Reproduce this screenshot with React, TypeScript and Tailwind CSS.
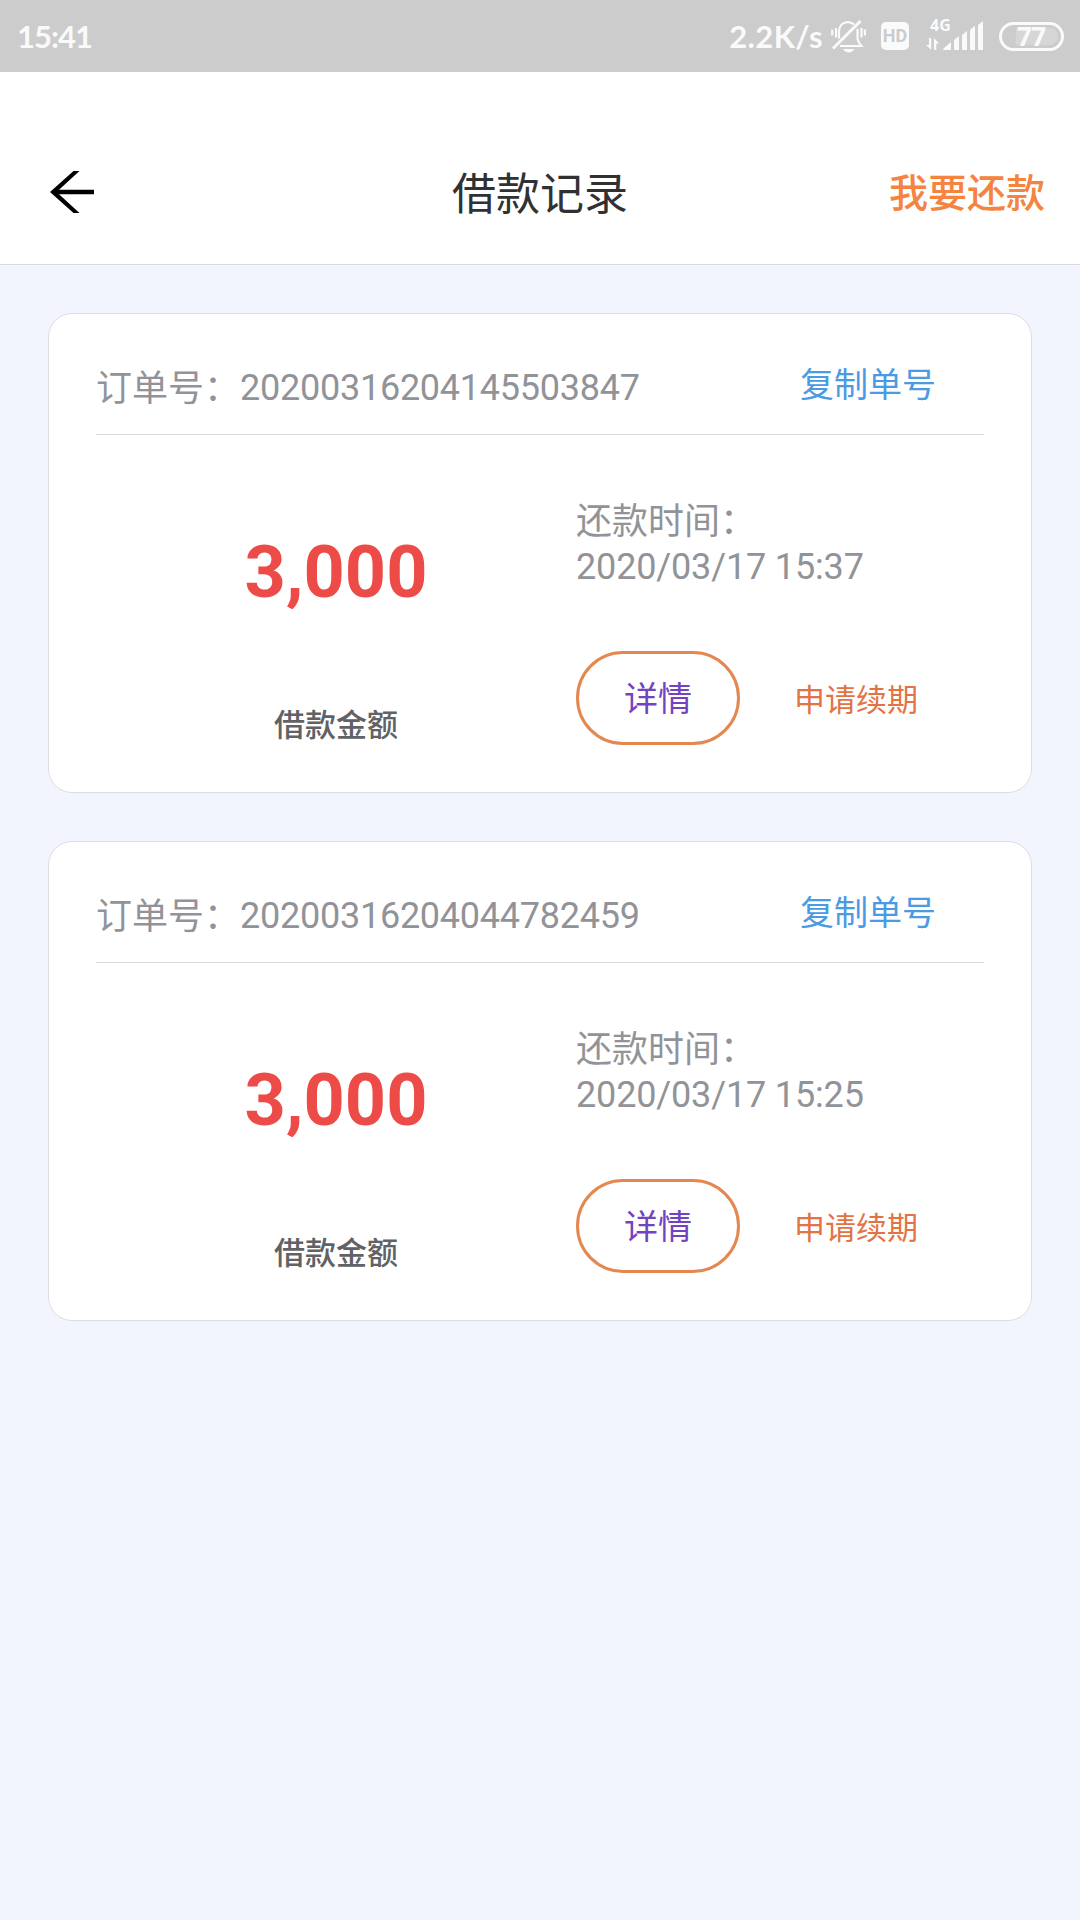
type Order = { id: string; amount: string; due: string };

const orders: Order[] = [
  { id: '20200316204145503847', amount: '3,000', due: '2020/03/17 15:37' },
  { id: '20200316204044782459', amount: '3,000', due: '2020/03/17 15:25' },
];

function MutedBell() {
  return (
    <svg width="35" height="34" viewBox="0 0 35 34" fill="none" stroke="#fafafa" strokeWidth="2.2">
      <path d="M8 19.500V12.500C8.300 6.500 12 3.200 17 3.200c2.500 0 4.500.8 6 2.300" />
      <path d="M26.500 10v9c0 3 1.500 5 4 8H9" />
      <path d="M1.200 10.500v6M5 9v9.500M30.500 9v9.500M34 10.500v6" strokeWidth="2.200" />
      <path d="M2 29.500L29.500 2" strokeWidth="3" />
      <path d="M12 30h11.500c-1.500 2-3 3.500-5.700 3.500S13.500 32 12 30z" fill="#fafafa" stroke="none" />
    </svg>
  );
}

function Signal() {
  return (
    <svg width="58" height="52" viewBox="0 -6 58 52" fill="#fafafa">
      <path d="M3 22h2.200v12L0 29h3zM8 34V22l5 5.500h-2.700V34z" />
      <path d="M17 33l8-7v8h-7a1 1 0 01-1-1zM28 24l5-4v14h-4a1 1 0 01-1-1zM36 19l5-4v19h-4a1 1 0 01-1-1zM44 14l5-4.500V34h-4a1 1 0 01-1-1zM52 9l5-4v29h-4a1 1 0 01-1-1z" />
      <text x="4" y="15" fontFamily="Noto Sans" fontWeight="700" fontSize="16">4G</text>
    </svg>
  );
}

function StatusBar() {
  return (
    <div className="flex h-[72px] items-center bg-[#cccccc] pl-[17px] pr-[16px] font-['Lato',sans-serif] font-bold text-[#fafafa]">
      <span className="text-[31px] leading-[72px] tracking-[-1px]">15:41</span>
      <div className="ml-auto flex items-center">
        <span className="mr-[8px] text-[31px] leading-[72px] tracking-[0.4px]">2.2K/s</span>
        <MutedBell />
        <div className="ml-[15px] flex h-7 w-7 items-center justify-center rounded-[5px] bg-[#fafafa] font-['Roboto',sans-serif] text-[18px] font-bold leading-7 text-[#cccccc]">
          HD
        </div>
        <div className="ml-[17px]">
          <Signal />
        </div>
        <div className="ml-[15px] flex h-[29px] w-[65px] items-center rounded-full border-[3px] border-[#fafafa] p-[3px]">
          <div className="ml-[11px] flex h-full flex-1 items-center rounded-r-full bg-[#d6d6d6] pl-px font-['Open_Sans',sans-serif] text-[26px] font-bold leading-5 tracking-[-0.5px]">
            77
          </div>
        </div>
      </div>
    </div>
  );
}

function Header() {
  return (
    <header className="grid h-[193px] grid-cols-3 items-center border-b border-[#d9dadc] bg-white pt-12">
      <svg className="ml-[50px]" width="44" height="42" viewBox="0 0 44 42">
        <path d="M0 21L23.500 0h6L9 18.700h35v4.600H9L29.500 42h-6z" fill="#000" />
      </svg>
      <h1 className="pt-[5px] text-center text-[44px] leading-[60px] text-[#303133]">借款记录</h1>
      <a className="mr-[35px] pt-[4px] text-right text-[39px] font-medium leading-[60px] text-[#f4843f]">我要还款</a>
    </header>
  );
}

function OrderCard({ order }: { order: Order }) {
  return (
    <section className="h-[480px] rounded-[24px] border border-[#dcdee2] bg-white px-[47px] pt-[47px]">
      <div className="flex h-[74px] justify-between border-b border-[#d9dadc] pr-[48px]">
        <p className="flex text-[36px] leading-[54px] text-[#919398]">
          <span className="pt-px">订单号：</span>
          <span className="tracking-[-0.25px]">{order.id}</span>
        </p>
        <button className="h-[48px] text-[34px] leading-[48px] text-[#4a9ae4]">复制单号</button>
      </div>
      <div className="flex">
        <div className="flex w-[480px] flex-col items-center">
          <p className="mt-[96px] text-[72px] font-bold leading-[84px] text-[#ec4b48]">{order.amount}</p>
          <p className="mt-[88px] text-[31px] font-medium leading-[46px] text-[#606266]">借款金额</p>
        </div>
        <div className="pt-[64px] text-[#919398]">
          <p className="text-[36px] leading-[46px]">还款时间：</p>
          <p className="text-[36px] leading-[45px] tracking-[-0.15px]">{order.due}</p>
          <div className="mt-[61px] flex items-center">
            <button className="h-[94px] w-[164px] rounded-full border-[3px] border-[#e58750] pt-[3px] text-[34px] text-[#7244c0]">
              详情
            </button>
            <button className="ml-[54px] pt-[6px] text-[31px] leading-[46px] text-[#e27344]">申请续期</button>
          </div>
        </div>
      </div>
    </section>
  );
}

export default function App() {
  return (
    <div className="h-[1920px] w-[1080px] overflow-hidden bg-[#f2f5fd] font-['Roboto','Noto_Sans_CJK_SC',sans-serif]">
      <StatusBar />
      <Header />
      <main className="flex flex-col gap-12 p-12">
        {orders.map((order) => (
          <OrderCard key={order.id} order={order} />
        ))}
      </main>
    </div>
  );
}
